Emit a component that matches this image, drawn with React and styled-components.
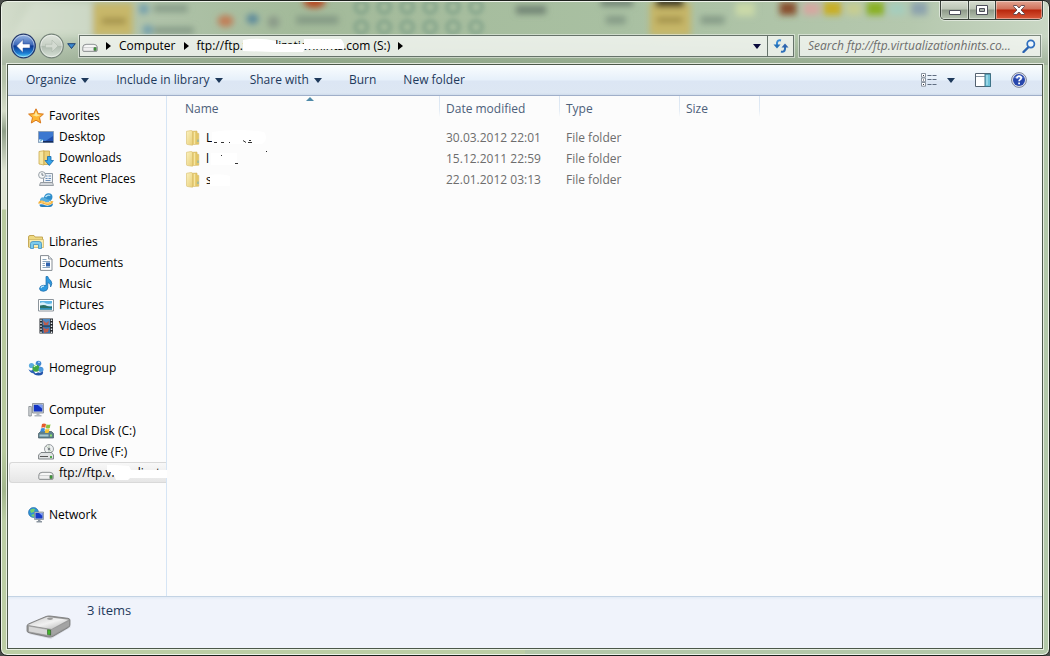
import React from "react";
import styled, { createGlobalStyle, css } from "styled-components";

const GlobalStyle = createGlobalStyle`
  *, *::before, *::after { box-sizing: border-box; }
  html { background: #4a4c4a; }
  body { margin: 0; }
  body, button, input, table {
    font-family: "Open Sans", "Noto Sans", sans-serif;
    font-size: 12px;
    line-height: 16px;
  }
  button, input { border: 0; margin: 0; padding: 0; background: none; color: inherit; }
  svg { display: block; flex: none; }
`;

/* ---------- window frame ---------- */

const Frame = styled.div`
  position: relative;
  display: flex;
  flex-direction: column;
  min-height: 100vh;
  padding: 0 6px 6px;
  overflow: hidden;
  border: 1px solid #1d211d;
  border-radius: 7px;
  background:
    linear-gradient(90deg, transparent 50%, #b3c8a9 50%) 0 0 / 100% 100% no-repeat,
    linear-gradient(180deg, #b5c3aa 0 80px, #d5ddc9 110px, #8f9f88 130px, #dfe5d3 170px 208px, #b9cb9f 209px 450px, #a3b78d 490px, #bccea5 520px);
  box-shadow: inset 0 0 0 1px #eef3ea;
`;

const Backdrop = styled.svg`
  position: absolute;
  top: 1px;
  left: 1px;
  width: calc(100% - 2px);
  height: 63px;
`;

const TitleBar = styled.header`
  position: relative;
  display: flex;
  justify-content: flex-end;
  align-items: flex-start;
  height: 32px;
`;

const CaptionButtons = styled.div`
  display: flex;
  height: 19px;
  border: 1px solid #39413a;
  border-top: 0;
  border-radius: 0 0 5px 5px;
  overflow: hidden;
  box-shadow: 0 0 0 1px rgba(255, 255, 255, 0.5);
`;

const CaptionButton = styled.button`
  display: flex;
  align-items: center;
  justify-content: center;
  width: ${(p) => (p.$close ? 47 : 27)}px;
  background: ${(p) =>
    p.$close
      ? "linear-gradient(180deg, #e2a592 0, #d0715a 8px, #b9260c 9px, #d9593a 18px)"
      : "linear-gradient(180deg, #d6ddd0 0, #bcc6b6 8px, #8e9a89 9px, #b7c4b1 18px)"};
  box-shadow: inset 0 0 0 1px rgba(255, 255, 255, 0.4);
  & + & { border-left: 1px solid #39413a; }
`;

/* ---------- navigation bar ---------- */

const NavBar = styled.nav`
  position: relative;
  display: flex;
  align-items: center;
  height: 31px;
  padding: 0 2px 5px 4px;
`;

const HistoryButtons = styled.div`
  display: flex;
  gap: 3px;
  margin-right: 3px;
`;

const IconButton = styled.button`
  display: flex;
  align-items: center;
  justify-content: center;
`;

const AddressBar = styled.div`
  display: flex;
  align-items: stretch;
  flex: 1;
  min-width: 0;
  height: 22px;
  margin: 0 5px 0 3px;
  border: 1px solid #66736a;
  background: rgba(245, 248, 244, 0.82);
  box-shadow: 0 0 0 1px rgba(255, 255, 255, 0.45);
`;

const Crumbs = styled.div`
  display: flex;
  align-items: center;
  flex: 1;
  gap: 8px;
  min-width: 0;
  padding-left: 2px;
  color: #000;
  white-space: nowrap;
`;

const Crumb = styled.button`
  position: relative;
  white-space: nowrap;
`;

const AddressButton = styled(IconButton)`
  width: ${(p) => p.$width}px;
  ${(p) => p.$divided && css`border-left: 1px solid #66736a;`}
`;

const SearchBox = styled.label`
  display: flex;
  align-items: center;
  flex: none;
  width: 242px;
  height: 22px;
  padding: 0 4px 0 8px;
  border: 1px solid #7c897e;
  background: rgba(245, 248, 244, 0.82);
  box-shadow: 0 0 0 1px rgba(255, 255, 255, 0.45);
`;

const SearchInput = styled.input`
  flex: 1;
  min-width: 0;
  outline: none;
  text-overflow: ellipsis;
  &::placeholder { color: #6d6d6d; font-style: italic; opacity: 1; }
`;

/* ---------- client area ---------- */

const Client = styled.div`
  position: relative;
  display: flex;
  flex: 1;
  flex-direction: column;
  border: 1px solid #4b5749;
  background: #fcfcfc;
  box-shadow: 0 0 0 1px rgba(240, 245, 236, 0.85);
`;

const Toolbar = styled.div`
  display: flex;
  align-items: center;
  gap: 27px;
  height: 31px;
  padding: 0 15px 0 18px;
  border-bottom: 1px solid #a0afc9;
  background: linear-gradient(180deg, #fafdfe 0, #e6f0fa 15px, #dce6f4 16px, #dde7f3 28px, #cfdcec 30px);
  color: #1e395b;
`;

const ToolButton = styled.button`
  display: flex;
  align-items: center;
  gap: ${(p) => p.$gap || 5}px;
  white-space: nowrap;
`;

const ToolbarEnd = styled.div`
  display: flex;
  align-items: center;
  gap: 20px;
  margin-left: auto;
`;

const Panes = styled.div`
  display: flex;
  flex: 1;
`;

const Sidebar = styled.aside`
  display: flex;
  flex-direction: column;
  flex: none;
  gap: 21px;
  width: 159px;
  padding: 9px 0 21px 1px;
  border-right: 1px solid #d6e5f5;
`;

const Group = styled.ul`
  margin: 0;
  padding: 0;
  list-style: none;
`;

const Place = styled.a`
  position: relative;
  display: flex;
  align-items: center;
  gap: 5px;
  height: 21px;
  padding-left: ${(p) => (p.$child ? 28 : 18)}px;
  border: 1px solid transparent;
  border-right: 0;
  color: #000;
  text-decoration: none;
  white-space: nowrap;
  ${(p) =>
    p.$selected &&
    css`
      border-color: #d9d9d9;
      border-radius: 3px 0 0 3px;
      background: linear-gradient(180deg, #f8f8f8, #e6e6e6);
    `}
`;

const Cover = styled.svg`
  position: absolute;
  top: 0;
  left: ${(p) => p.$left || 0}px;
`;

const FileArea = styled.main`
  flex: 1;
  min-width: 0;
`;

const FileTable = styled.table`
  table-layout: fixed;
  width: 593px;
  border-collapse: collapse;
  color: #6d6d6d;
`;

const HeadCell = styled.th`
  height: 31px;
  padding: 0 0 0 ${(p) => (p.$first ? 12 : 0)}px;
  vertical-align: top;
  font-weight: 400;
  text-align: left;
  background: linear-gradient(180deg, #d9e5f2 0, #e2ebf5 14px, #fcfcfc 21px) right top / 1px 21px no-repeat;
`;

const HeadButton = styled.button`
  position: relative;
  display: block;
  width: 100%;
  height: 25px;
  padding-left: 6px;
  text-align: left;
  color: #4c607a;
`;

const SortMark = styled.svg`
  position: absolute;
  top: 1px;
  left: calc(50% - 4px);
`;

const Cell = styled.td`
  height: 21px;
  padding: 0 0 0 6px;
  white-space: nowrap;
`;

const FileName = styled.a`
  position: relative;
  display: flex;
  align-items: center;
  gap: 5px;
  padding-left: 12px;
  color: #000;
  text-decoration: none;
`;

const Details = styled.footer`
  display: flex;
  align-items: flex-start;
  gap: 15px;
  height: 52px;
  padding: 4px 18px;
  border-top: 1px solid #c3d3e4;
  background: linear-gradient(180deg, #e3ebf5 0, #f0f3fb 3px);
  color: #1e395b;
  font-size: 13px;
  line-height: 18px;
`;

const DriveSlot = styled.div`
  padding-top: 14px;
`;

/* ---------- icons ---------- */

const Ico = ({ children, w = 16, h = 16, ...rest }) => (
  <svg width={w} height={h} viewBox={`0 0 ${w} ${h}`} aria-hidden="true" {...rest}>
    {children}
  </svg>
);

const Down = ({ color = "#1e395b" }) => (
  <Ico w={8} h={5}><path d="M0 0h8L4 5z" fill={color} /></Ico>
);
const Right = () => (
  <Ico w={5} h={8}><path d="M0 0l5 4-5 4z" fill="#000" /></Ico>
);

const DriveBody = () => (
  <>
    <path d="M.8 9Q1 6.500 4 6.300H12Q15 6.500 15.300 9V12Q15.300 13.500 14 13.500H2Q.7 13.500 .7 12z" fill="#c9cbcb" stroke="#85898a" strokeWidth=".8" />
    <path d="M1.500 9Q2.500 7 4.500 7H12Q13.500 7 14.500 9z" fill="#f7f7f7" />
    <path d="M1.500 9.800h9.500v2.700H1.500z" fill="#efefef" />
    <path d="M12 9.500h2.200v3H12z" fill="#37a031" stroke="#4e6b4c" strokeWidth=".5" />
  </>
);

const icons = {
  star: (
    <Ico>
      <path d="M8 .8l2.200 4.800 5.200.5-3.900 3.500 1.200 5.400L8 12.200 3.300 15l1.200-5.400L.6 6.100l5.200-.5z" fill="#fdb735" stroke="#d9781c" strokeWidth="1" />
      <path d="M8 3l1.400 3.500 3.600.4-4.500 1.600L4 7l2.600-.5z" fill="#ffe89a" />
    </Ico>
  ),
  desktop: (
    <Ico>
      <path d="M.5 2.500h15v11H.5z" fill="#1f4fb0" stroke="#8ba0b9" />
      <path d="M1 3h14v4L6 13H1z" fill="#3c78d0" />
      <path d="M1 12h14v1.500H1z" fill="#142c5f" />
      <path d="M1 10.500h4v3H1z" fill="#dff2fb" /><path d="M2 12.500l2.500-2.500" stroke="#1c8ac8" />
    </Ico>
  ),
  downloads: (
    <Ico>
      <path d="M1 1.500l5-.8V15l-5-1z" fill="#f6e7a2" stroke="#cbaa4e" strokeWidth=".8" />
      <path d="M6 1h5.500v13.500H6z" fill="#ecd27a" stroke="#c8a64a" strokeWidth=".8" />
      <path d="M9.500 6.500h3.500v4h2.500l-4.200 5-4.300-5h2.500z" fill="#35a3ea" stroke="#1469ac" strokeWidth=".8" />
    </Ico>
  ),
  recent: (
    <Ico>
      <path d="M5.500 2.500h9v9h-9z" fill="#eef2f6" stroke="#8f9aa5" />
      <path d="M7.500 5h2m1 0h2.500M7.500 7.500h2m1 0h2.500M7.500 9.500h5" stroke="#6b8fb8" />
      <path d="M2.500 11.500h12l1 3h-14z" fill="#d2d6da" stroke="#8e959c" strokeWidth=".9" />
      <circle cx="4" cy="4" r="3.400" fill="#f5f7f8" stroke="#8f979e" strokeWidth=".9" />
      <path d="M4 2v2.200h1.700" stroke="#586470" fill="none" strokeWidth=".8" />
    </Ico>
  ),
  skydrive: (
    <Ico>
      <path d="M6 5Q7 1.500 10.500 1.200 14.500 1.200 14.500 5 14.500 7.500 12.500 9L5.500 7z" fill="#2f8ecb" />
      <path d="M7.500 5q2-2.800 4.800-1.500" fill="none" stroke="#b5e2f7" strokeWidth="1.300" />
      <path d="M2 7.500Q3.500 4 7 6q3.500 2.500 6 1.500-2 3.500-5.500 2.500Q5 8 2 9z" fill="#57addd" />
      <path d="M.5 10Q3 7.500 6 9.300q3 2 5.500.7 2-1.500 4-.5-2 4-6.500 3.500Q5.500 12 4 11.500 2 11 .5 12z" fill="#f3b13c" />
      <path d="M3 10q2-.5 4.500 1 3 1 5.500-.6" fill="none" stroke="#ffe5a1" strokeWidth=".8" />
      <path d="M1.500 12.500q3-.8 5.500.8 4.500 1.200 8-2Q15 15 11.500 15H4q-2.500 0-2.500-2.500z" fill="#2780bf" />
    </Ico>
  ),
  libraries: (
    <Ico>
      <path d="M.5 3Q.5 1.500 2 1.500h4l1 1.500h7.500v10H.5z" fill="#eed982" stroke="#bfa04b" strokeWidth=".9" />
      <path d="M1 5.500h14.500v8H1z" fill="#f8ecb1" stroke="#cdb25b" strokeWidth=".7" />
      <path d="M2.500 14.500v-5Q2.500 7.500 5 7.500h6q2.500 0 2.500 2v5h-3v-4h-5v4z" fill="#7ccbed" stroke="#3d8fc0" strokeWidth=".8" />
    </Ico>
  ),
  documents: (
    <Ico>
      <path d="M2.500.6h8l3.500 3.400v11.400h-11.500z" fill="#fff" stroke="#858c93" />
      <path d="M10.500.6V4H14" fill="#dde3e8" stroke="#858c93" strokeWidth=".8" />
      <path d="M4.500 4.500h4M4.500 6.500h7.500M4.500 8.500h2.500M4.500 10.500h2.500M4.500 12.500h7.500" stroke="#7d9cb5" strokeWidth=".9" />
      <path d="M8 7.500h4v4H8z" fill="#2f63ae" />
    </Ico>
  ),
  music: (
    <Ico>
      <path d="M8 .5h1.800q.5 2.500 3 4 2.200 3-.2 6.500.5-3.500-2.800-4.500V12Q9.500 15 5.500 15.300 1.500 15.300 1.500 12.500 2 9.500 5.500 9.300L8 9.600z" fill="#2e9ae0" stroke="#1667a8" strokeWidth=".7" />
      <path d="M3 12q.5-1.800 3-1.800" stroke="#bfe6fa" fill="none" strokeWidth="1.200" />
    </Ico>
  ),
  pictures: (
    <Ico>
      <path d="M.5 2.500h15v11.500H.5z" fill="#fff" stroke="#8c949b" />
      <path d="M2 4h12v8.500H2z" fill="#5fb5e4" />
      <path d="M2 6q3-1.500 6 .5 3 1 6-.3V9H2z" fill="#d5effb" />
      <path d="M2 8.500q5-1 7 .5 3 1 5 .5v3H2z" fill="#2a6f62" />
      <path d="M2 11h12v1.500H2z" fill="#2f8fb8" />
    </Ico>
  ),
  videos: (
    <Ico>
      <path d="M1.500.5h13.500v15H1.500z" fill="#23272c" />
      <path d="M4.500 1h7.500v6.500H4.500z" fill="#4f8ac4" /><path d="M4.500 8.500h7.500V15H4.500z" fill="#3474b4" />
      <path d="M5 2l3 3 3-2-1 4H6zM5 9l3 2 3-1-1 4-4 1z" fill="#bd5c4b" />
      <path d="M3 1.500v14M13.500 1.500v14" stroke="#e6eaed" strokeWidth="1.400" strokeDasharray="1.500 1.500" />
    </Ico>
  ),
  homegroup: (
    <Ico>
      <circle cx="10.500" cy="3.500" r="2.800" fill="#3f87d2" /><circle cx="3.500" cy="5.500" r="2.600" fill="#5cacde" />
      <path d="M10 2.500q1-1 2 0" stroke="#c5e4fa" fill="none" />
      <path d="M.5 9q3 3 4.500 0l2 4Q2 14 .5 9z" fill="#2b62b5" />
      <path d="M11 6.500q3 0 4 2l-2 1.500z" fill="#2354aa" />
      <circle cx="8" cy="8.300" r="3.500" fill="#3fa743" /><path d="M6 7q1-2 3-1.500" stroke="#d8f5c8" strokeWidth="1.300" fill="none" />
      <circle cx="13" cy="9.500" r="2.500" fill="#4d9ade" />
      <path d="M5 12.300q3 2 5 0 2 1 5-1 1 4.200-4.500 4.200-4.500 0-5.500-3.200z" fill="#2354aa" />
    </Ico>
  ),
  computer: (
    <Ico>
      <path d="M.8 4.500h2.500v9.500H.8z" fill="#d5d8da" stroke="#7f868c" strokeWidth=".8" />
      <path d="M4.500 1.500h11v9.500h-11z" fill="#c6ccd2" stroke="#8a9198" strokeWidth=".9" />
      <path d="M5.800 2.800h8.500v6.700H5.800z" fill="#1334c4" /><path d="M9.500 2.800h4.800v4z" fill="#7b9bf0" />
      <path d="M8.500 11h3v2h2v1.500h-7V13h2z" fill="#b2b8be" />
    </Ico>
  ),
  localdisk: (
    <Ico>
      <path d="M.5 10.500l2-2h11l2 2v4.500H.5z" fill="#5c7f8c" stroke="#50656d" strokeWidth=".8" />
      <path d="M1.500 11.500h9v2h-9z" fill="#a9cad2" /><path d="M12 11.500h2v2h-2z" fill="#8ae26a" />
      <path d="M4 1q2-1 4 0l-.7 3.800q-2-1-4 0z" fill="#e75b2b" /><path d="M8.500 1.300q2 1 4 0L11.800 5q-2 1-4 0z" fill="#8cc13d" />
      <path d="M3 5.500q2-1 4 0L6.300 9q-2-1-4 0z" fill="#3c8bd8" /><path d="M7.500 5.800q2 1 4 0L10.800 9.500q-2 1-4 0z" fill="#f8c331" />
    </Ico>
  ),
  cddrive: (
    <Ico>
      <circle cx="11" cy="5" r="4.500" fill="#eef0f1" stroke="#8c9296" strokeWidth=".9" />
      <path d="M8 2l6 6M11 .8V9" stroke="#b9c9b5" /><circle cx="11" cy="5" r="1.300" fill="#7d8488" />
      <path d="M.6 11l2.400-2.500h10.500l2 2.500v4H.6z" fill="#e1e3e4" stroke="#757a7d" strokeWidth=".9" />
      <path d="M2 12.500h8" stroke="#555" /><path d="M12 12h2v2h-2z" fill="#54a84c" />
    </Ico>
  ),
  drive: <Ico><g transform="translate(0 1)"><DriveBody /></g></Ico>,
  network: (
    <Ico>
      <circle cx="5.500" cy="5.500" r="5" fill="#2f91d6" stroke="#1d67a5" strokeWidth=".6" />
      <path d="M2 3q3-2 5-1l-1 3-3 1zM3 8l3-1 1 2-2 1z" fill="#75d06c" />
      <path d="M6.500 5h9v7.500h-9z" fill="#b8c4d0" stroke="#7b8793" strokeWidth=".7" />
      <path d="M7.500 6h7v5.500h-7z" fill="#163bc8" /><path d="M11 6h3.500v3z" fill="#829ff2" />
      <path d="M10 12.500h2.500v1.500h1.500v1.500H8.500V14H10z" fill="#8b959f" />
    </Ico>
  ),
};

const FolderIcon = () => (
  <Ico>
    <defs>
      <linearGradient id="flap" x1="0" x2="1" y1="0" y2="1">
        <stop offset="0" stopColor="#fbf2c0" /><stop offset="1" stopColor="#e9cf78" />
      </linearGradient>
    </defs>
    <path d="M7 1.300l5-.3v2l1.800.5v10.700L7 14.500z" fill="#e3c667" stroke="#d6ba66" strokeWidth=".6" />
    <path d="M9.500 2v12" stroke="#f5e6a4" strokeWidth="1.500" />
    <path d="M1.500 1.300L6 .5q1.500 0 1.500 1.200v13.600L2.500 14.500q-1 0-1-1z" fill="url(#flap)" stroke="#d8bd6c" strokeWidth=".6" />
    <path d="M13 9.500v2.500" stroke="#6fb1c2" />
  </Ico>
);

const Arrow = ({ active }) => {
  const id = active ? "back" : "fwd";
  return (
    <Ico w={25} h={26}>
      <defs>
        <linearGradient id={id} x1="0" y1="0" x2="0" y2="1">
          {active ? (
            <>
              <stop offset="0" stopColor="#9fbbe6" /><stop offset=".45" stopColor="#3c68b8" />
              <stop offset=".5" stopColor="#0d3a94" /><stop offset=".8" stopColor="#1b7bd2" /><stop offset="1" stopColor="#62dcfa" />
            </>
          ) : (
            <>
              <stop offset="0" stopColor="#e0e6dd" /><stop offset=".48" stopColor="#c6cfc4" />
              <stop offset=".52" stopColor="#b0bcb0" /><stop offset="1" stopColor="#d9e2d8" />
            </>
          )}
        </linearGradient>
      </defs>
      <circle cx="12.500" cy="13" r="11.800" fill={`url(#${id})`} stroke={active ? "#25396b" : "#76847a"} strokeWidth="1.200" />
      <circle cx="12.500" cy="13" r="10.700" fill="none" stroke="#fff" strokeOpacity=".45" />
      <path
        d={active ? "M12 6.500L5.500 13l6.500 6.500v-4.500h7v-4h-7z" : "M13 7l6 6-6 6v-4.300H6.500v-3.400H13z"}
        fill={active ? "#fff" : "#d3dad1"}
        stroke={active ? "#2d4f96" : "#a9b4a9"}
        strokeWidth=".5"
      />
    </Ico>
  );
};

const BigDrive = () => (
  <Ico w={46} h={26}>
    <defs>
      <linearGradient id="top" x1="0" y1="0" x2="1" y2="1">
        <stop offset="0" stopColor="#c9c9c9" /><stop offset=".5" stopColor="#f1f1f1" /><stop offset="1" stopColor="#b0b0b0" />
      </linearGradient>
    </defs>
    <path d="M3 19l22 5L45 12l-3-2z" fill="#000" opacity=".1" />
    <path d="M1 11Q1 9.500 3 8.700L20 1.500q2-.7 4-.5l18 2.300q2 .4 2 1.800v4.700q0 1.500-1.500 2.500L27 21.300q-2 1-4.500.7L3 17.800q-2-.5-2-2z" fill="#9a9a9a" stroke="#747474" strokeWidth=".8" />
    <path d="M2 10q8-3.800 19-8l21.500 2.800L25.500 14z" fill="url(#top)" />
    <path d="M2.500 11l21.500 3.800v6L3.500 17q-1-.5-1-1.500z" fill="#d6d6d6" stroke="#888" strokeWidth=".5" />
    <path d="M25.500 14.800L43 6.300v4.500L26.500 20z" fill="#a4a4a4" />
    <ellipse cx="24" cy="3.800" rx="3" ry="1.100" fill="#9b9b9b" />
    <path d="M21.500 14.700l3 .4v5l-3-.5z" fill="#43b52c" stroke="#2b5b25" strokeWidth=".6" />
  </Ico>
);

/* Shapes of the window behind, seen softly through the glass. */
const GlassBackdrop = () => (
  <Backdrop viewBox="0 0 1048 63" preserveAspectRatio="none" aria-hidden="true">
    <defs>
      <filter id="soft" x="-10%" y="-30%" width="120%" height="160%"><feGaussianBlur stdDeviation="3" /></filter>
      <filter id="haze" x="-10%" y="-50%" width="120%" height="200%"><feGaussianBlur stdDeviation="2" /></filter>
      <linearGradient id="glass" x1="0" x2="1" y1="0" y2="0">
        <stop offset="0" stopColor="#d3dccb" /><stop offset=".09" stopColor="#b4c6af" /><stop offset=".28" stopColor="#a3ba9a" />
        <stop offset=".6" stopColor="#a9c0a2" /><stop offset=".87" stopColor="#b5c8ae" /><stop offset="1" stopColor="#c9d7c4" />
      </linearGradient>
      <linearGradient id="lower" x1="0" x2="0" y1="0" y2="1">
        <stop offset=".55" stopColor="#7d9277" stopOpacity="0" /><stop offset="1" stopColor="#7d9277" stopOpacity=".5" />
      </linearGradient>
    </defs>
    <rect width="1048" height="63" fill="url(#glass)" />
    <rect width="1048" height="63" fill="url(#lower)" />
    <g filter="url(#soft)">
      <path d="M30 0h60v34H10z" fill="#dbe2d4" opacity=".6" />
      <path d="M91 1h40v33H91zM649 1h41v33h-41z" fill="#cab662" opacity=".9" />
      <path d="M100 16h24v6h-24zM656 15h26v6h-26z" fill="#978643" opacity=".8" />
      <path d="M655-3h28v8h-28z" fill="#15110c" />
      <path d="M152 3h34v7h-34zM152 25h40v7h-40zM295 14h42v8h-42zM605 14h20v8h-20zM700 14h24v8h-24z" fill="#7c9180" opacity=".8" />
      <circle cx="142" cy="7" r="5" fill="#6f9dad" /><circle cx="146" cy="28" r="5" fill="#6f9dad" />
      <ellipse cx="224" cy="19" rx="8" ry="6" fill="#c17e57" /><ellipse cx="251" cy="17" rx="6" ry="5" fill="#58879b" />
      <ellipse cx="272" cy="20" rx="6" ry="6" fill="#8a9a88" /><ellipse cx="313" cy="0" rx="11" ry="6" fill="#b54a20" />
      <path d="M600-3h32v7h-32zM515 4h30v8h-30z" fill="#708273" />
      <path d="M735 1h19v13h-19z" fill="#cad9a8" /><path d="M779 0h17v13h-17z" fill="#88502f" />
      <path d="M803 1h16v12h-16z" fill="#d6a7a0" /><path d="M823 0h18v13h-18z" fill="#c9ae22" />
      <path d="M846 1h15v12h-15z" fill="#c7cd91" /><path d="M866 0h18v13h-18z" fill="#89b023" />
      <path d="M889 1h16v12h-16z" fill="#a5cdbd" /><path d="M911 0h16v13h-16z" fill="#8ba2ad" />
    </g>
    <g fill="none" stroke="#6f9580" strokeWidth="4" opacity=".55" filter="url(#haze)">
      {[0, 1, 2, 3, 4, 5].map((n) => (
        <React.Fragment key={n}>
          <circle cx={360 + n * 23} cy="5" r="6" /><circle cx={360 + n * 23} cy="25" r="6" />
        </React.Fragment>
      ))}
    </g>
  </Backdrop>
);

/* ---------- data ---------- */

const places = [
  [["star", "Favorites"], ["desktop", "Desktop"], ["downloads", "Downloads"], ["recent", "Recent Places"], ["skydrive", "SkyDrive"]],
  [["libraries", "Libraries"], ["documents", "Documents"], ["music", "Music"], ["pictures", "Pictures"], ["videos", "Videos"]],
  [["homegroup", "Homegroup"]],
  [["computer", "Computer"], ["localdisk", "Local Disk (C:)"], ["cddrive", "CD Drive (F:)"], ["drive", "ftp://ftp.virtualizat", true]],
  [["network", "Network"]],
];

const files = [
  {
    name: "L", date: "30.03.2012 22:01",
    cover: <><path d="M6 2Q30-2 58 2q5 7-2 12H6z" fill="#fff" /><path d="M8 12.500h3M15 12.500h3M23 12.500h1M37 10.500l3 2M42 12.500h4M43 10.500h2" stroke="#333" /></>,
  },
  {
    name: "l", date: "15.12.2011 22:59",
    cover: <><path d="M5 2h26v12H5z" fill="#fff" /><path d="M15 4l1 1M29 12.500h3" stroke="#333" /><path d="M60 0h1v1h-1z" fill="#222" /></>,
  },
  { name: "s", date: "22.01.2012 03:13", cover: <path d="M4 3Q15 1 24 4v10H4z" fill="#fff" /> },
];

/* ---------- app ---------- */

export default function App() {
  return (
    <>
      <GlobalStyle />
      <Frame>
        <GlassBackdrop />
        <TitleBar>
          <CaptionButtons>
            <CaptionButton aria-label="Minimize">
              <Ico w={12} h={9}><path d="M.5 4.500h11v4H.5z" fill="#fff" stroke="#4d4f5a" /></Ico>
            </CaptionButton>
            <CaptionButton aria-label="Maximize">
              <Ico w={12} h={10}><path d="M.5.5h11v9H.5z" fill="#fff" stroke="#4d4f5a" /><path d="M3.500 3.500h5v3h-5z" fill="#a8b3a8" stroke="#4d4f5a" /></Ico>
            </CaptionButton>
            <CaptionButton $close aria-label="Close">
              <Ico w={12} h={10}><path d="M.6.500h3.200L6 3 8.200.500h3.200v1L8 5l3.400 3.500v1H8.200L6 7 3.800 9.500H.6v-1L4 5 .6 1.500z" fill="#fff" stroke="#59434a" strokeWidth=".9" /></Ico>
            </CaptionButton>
          </CaptionButtons>
        </TitleBar>

        <NavBar aria-label="Address">
          <HistoryButtons>
            <IconButton aria-label="Back"><Arrow active /></IconButton>
            <IconButton aria-label="Forward"><Arrow /></IconButton>
          </HistoryButtons>
          <IconButton aria-label="Recent pages">
            <Ico w={9} h={7}><path d="M.7.700h7.600L4.500 5.500z" fill="#3b8ad0" stroke="#1d4173" /></Ico>
          </IconButton>
          <AddressBar>
            <Crumbs>
              <Ico><DriveBody /></Ico>
              <Right />
              <Crumb>Computer</Crumb>
              <Right />
              <Crumb>
                ftp://ftp.virtualizationhints.com (S:)
                <Cover $left={46} width="102" height="16" viewBox="0 0 102 16" aria-hidden="true">
                  <path d="M0 2Q16-1 33 3v3h28V1h37q2 2 3 5l0 5H62l-2 3H30L0 13z" fill="#fff" />
                </Cover>
              </Crumb>
              <Right />
            </Crumbs>
            <AddressButton $width={20} aria-label="Previous locations"><Down color="#0a0a3c" /></AddressButton>
            <AddressButton $width={26} $divided aria-label="Refresh">
              <Ico>
                <path d="M8 2.500Q4.500 1.500 4 5v2" fill="none" stroke="#3a8ad3" strokeWidth="2" /><path d="M.5 6.500H7.500L4 10.500z" fill="#2470b8" />
                <path d="M8 13.500q3.500 1 4-2.500V9" fill="none" stroke="#2d6fb8" strokeWidth="2" /><path d="M8.500 9.500h7L12 5.500z" fill="#2f66b0" />
              </Ico>
            </AddressButton>
          </AddressBar>
          <SearchBox>
            <SearchInput type="text" aria-label="Search" placeholder="Search ftp://ftp.virtualizationhints.co..." />
            <Ico w={14} h={14}>
              <path d="M6.500 8L1.500 13" stroke="#2a62b0" strokeWidth="2.400" strokeLinecap="round" />
              <circle cx="8.800" cy="5" r="3.600" fill="#eef7fd" stroke="#2f6fbe" strokeWidth="1.700" />
            </Ico>
          </SearchBox>
        </NavBar>

        <Client>
          <Toolbar>
            <ToolButton>Organize <Down /></ToolButton>
            <ToolButton>Include in library <Down /></ToolButton>
            <ToolButton>Share with <Down /></ToolButton>
            <ToolButton>Burn</ToolButton>
            <ToolButton>New folder</ToolButton>
            <ToolbarEnd>
              <ToolButton $gap={10} aria-label="Change view">
                <Ico w={16} h={14}>
                  <path d="M.5.5h4v3.700h-4zM.5 5h4v3.700h-4zM.5 9.500h4v3.700h-4z" fill="#fff" stroke="#7e8894" strokeWidth=".9" />
                  <path d="M2 2h1v1H2zM2 6.500h1v1H2zM2 11h1v1H2z" fill="#334" />
                  <path d="M6.500 2.500h4M11.500 2.500h4M6.500 6.500h4M11.500 6.500h4M6.500 11.500h4M11.500 11.500h4" stroke="#5f6d80" />
                </Ico>
                <Down />
              </ToolButton>
              <ToolButton aria-label="Preview pane">
                <Ico w={16} h={14}>
                  <path d="M.5.5h15v13H.5z" fill="#fff" stroke="#53616f" /><path d="M1 3.500h9" stroke="#8a97a4" />
                  <path d="M10 1h5.500v12.500H10z" fill="#6fc2d9" stroke="#3e7387" /><path d="M12 2v10" stroke="#c1ebf4" />
                </Ico>
              </ToolButton>
              <ToolButton aria-label="Help">
                <Ico>
                  <circle cx="8" cy="8" r="7.400" fill="#e2e5ee" stroke="#7c8498" /><circle cx="8" cy="8" r="6" fill="#2746ac" />
                  <path d="M3 6q5-5 10 0-5 1-10 0z" fill="#6d8ddb" />
                  <path d="M5.800 6.300Q6 4.200 8 4.200q2.200 0 2.200 1.900 0 1.200-1.200 1.700-.9.500-.9 1.400" fill="none" stroke="#fff" strokeWidth="1.700" />
                  <path d="M7.200 10.500h1.800v1.700H7.200z" fill="#fff" />
                </Ico>
              </ToolButton>
            </ToolbarEnd>
          </Toolbar>

          <Panes>
            <Sidebar>
              {places.map((group) => (
                <Group key={group[0][1]}>
                  {group.map(([icon, label, selected], i) => (
                    <li key={label}>
                      <Place href="#" $child={i > 0} $selected={selected}>
                        {icons[icon]}
                        <span>{label}</span>
                        {selected && (
                          <Cover $left={97} width="60" height="19" viewBox="0 0 60 19" aria-hidden="true">
                            <path d="M0 2h8l14 1 2 4h36v8H23l-2 2H9l-2-5H4V9H0z" fill="#fff" />
                          </Cover>
                        )}
                      </Place>
                    </li>
                  ))}
                </Group>
              ))}
            </Sidebar>
            <FileArea>
              <FileTable>
                <colgroup><col width="273" /><col width="120" /><col width="120" /><col width="80" /></colgroup>
                <thead>
                  <tr>
                    <HeadCell $first>
                      <HeadButton>
                        Name
                        <SortMark width="8" height="4" viewBox="0 0 8 4" aria-hidden="true"><path d="M4 0l4 4H0z" fill="#4f8aa8" /></SortMark>
                      </HeadButton>
                    </HeadCell>
                    <HeadCell><HeadButton>Date modified</HeadButton></HeadCell>
                    <HeadCell><HeadButton>Type</HeadButton></HeadCell>
                    <HeadCell><HeadButton>Size</HeadButton></HeadCell>
                  </tr>
                </thead>
                <tbody>
                  {files.map((f) => (
                    <tr key={f.date}>
                      <Cell>
                        <FileName href="#">
                          <FolderIcon />
                          <span>{f.name}</span>
                          <Cover $left={33} width="64" height="16" viewBox="0 0 64 16" aria-hidden="true">{f.cover}</Cover>
                        </FileName>
                      </Cell>
                      <Cell>{f.date}</Cell>
                      <Cell>File folder</Cell>
                      <Cell />
                    </tr>
                  ))}
                </tbody>
              </FileTable>
            </FileArea>
          </Panes>

          <Details>
            <DriveSlot><BigDrive /></DriveSlot>
            <span>3 items</span>
          </Details>
        </Client>
      </Frame>
    </>
  );
}
